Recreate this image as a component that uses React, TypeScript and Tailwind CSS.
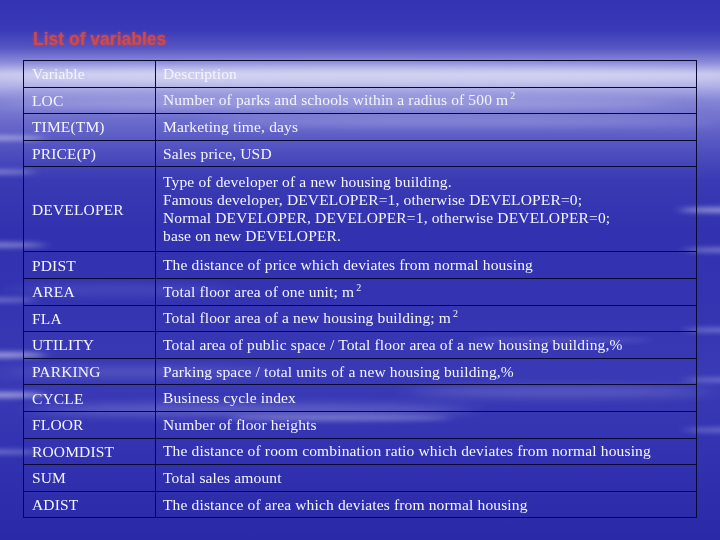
import React from 'react';

type Row = { name: string; desc: React.ReactNode; tall?: boolean };

const sup2 = <sup className="text-[10px] -top-[6px] leading-none ml-[2px]">2</sup>;

const rows: Row[] = [
  { name: 'Variable', desc: 'Description' },
  { name: 'LOC', desc: <>Number of parks and schools within a radius of 500 m{sup2}</> },
  { name: 'TIME(TM)', desc: 'Marketing time, days' },
  { name: 'PRICE(P)', desc: 'Sales price, USD' },
  {
    name: 'DEVELOPER',
    tall: true,
    desc: (
      <>
        Type of developer of a new housing building.
        <br />
        Famous developer, DEVELOPER=1, otherwise DEVELOPER=0;
        <br />
        Normal DEVELOPER, DEVELOPER=1, otherwise DEVELOPER=0;
        <br />
        base on new DEVELOPER.
      </>
    ),
  },
  { name: 'PDIST', desc: 'The distance of price which deviates from normal housing' },
  { name: 'AREA', desc: <>Total floor area of one unit; m{sup2}</> },
  { name: 'FLA', desc: <>Total floor area of a new housing building; m{sup2}</> },
  { name: 'UTILITY', desc: 'Total area of public space / Total floor area of a new housing building,%' },
  { name: 'PARKING', desc: 'Parking space / total units of a new housing building,%' },
  { name: 'CYCLE', desc: 'Business cycle index' },
  { name: 'FLOOR', desc: 'Number of floor heights' },
  { name: 'ROOMDIST', desc: 'The distance of room combination ratio which deviates from normal housing' },
  { name: 'SUM', desc: 'Total sales amount' },
  { name: 'ADIST', desc: 'The distance of area which deviates from normal housing' },
];

// soft white streaks over the blue, like the slide template's water texture
const Streaks = () => (
  <svg className="absolute inset-0 w-full h-full" viewBox="0 0 720 540" preserveAspectRatio="none">
    <defs>
      <filter id="soft" x="-20%" y="-100%" width="140%" height="300%">
        <feGaussianBlur stdDeviation="6 2.5" />
      </filter>
      <filter id="wide" x="-20%" y="-100%" width="140%" height="300%">
        <feGaussianBlur stdDeviation="14 5" />
      </filter>
    </defs>
    <g filter="url(#wide)" fill="#e0e0f8">
      <ellipse cx="360" cy="76" rx="380" ry="9" opacity="0.55" />
      <ellipse cx="340" cy="104" rx="330" ry="5" opacity="0.35" />
      <ellipse cx="460" cy="122" rx="260" ry="4" opacity="0.3" />
      <ellipse cx="250" cy="410" rx="220" ry="6" opacity="0.25" />
      <ellipse cx="560" cy="392" rx="150" ry="5" opacity="0.22" />
      <ellipse cx="140" cy="372" rx="140" ry="4" opacity="0.2" />
      <ellipse cx="120" cy="290" rx="110" ry="4" opacity="0.15" />
    </g>
    <g filter="url(#soft)" fill="#ececfc">
      <ellipse cx="0" cy="138" rx="45" ry="2" opacity="0.6" />
      <ellipse cx="0" cy="172" rx="35" ry="2" opacity="0.45" />
      <ellipse cx="0" cy="245" rx="45" ry="2.5" opacity="0.45" />
      <ellipse cx="0" cy="300" rx="35" ry="2" opacity="0.4" />
      <ellipse cx="0" cy="355" rx="45" ry="3" opacity="0.55" />
      <ellipse cx="0" cy="395" rx="45" ry="3" opacity="0.55" />
      <ellipse cx="0" cy="452" rx="40" ry="2" opacity="0.4" />
      <ellipse cx="720" cy="210" rx="40" ry="2.5" opacity="0.55" />
      <ellipse cx="720" cy="250" rx="35" ry="2" opacity="0.45" />
      <ellipse cx="720" cy="330" rx="35" ry="2" opacity="0.4" />
      <ellipse cx="720" cy="380" rx="35" ry="2" opacity="0.35" />
      <ellipse cx="720" cy="430" rx="35" ry="2" opacity="0.35" />
      <ellipse cx="340" cy="418" rx="110" ry="3" opacity="0.3" />
      <ellipse cx="560" cy="340" rx="90" ry="2" opacity="0.2" />
    </g>
  </svg>
);

export default function App() {
  return (
    <div className="relative w-[720px] h-[540px] overflow-hidden bg-[linear-gradient(180deg,#3333b3_0px,#3a3ab8_30px,#5656c4_48px,#8a8ad8_62px,#c0c0ec_74px,#b0b0e6_86px,#8686d6_100px,#6a6acc_122px,#5050c0_150px,#3a3ab4_180px,#3232b0_230px,#3434b2_300px,#3a3ab6_380px,#3434b2_440px,#2e2eac_500px,#2a2aa8_540px)]">
      <Streaks />
      <div className="relative flex flex-col pt-[29px]">
        <h1
          className="ml-[33px] h-[31px] text-[17.5px] leading-[21px] font-bold text-[#cf4a4a] blur-[0.5px] [text-shadow:0_0_3px_rgba(210,70,70,0.9)]"
          style={{ fontFamily: '"Liberation Sans", Arial, sans-serif' }}
        >
          List of variables
        </h1>
        <table
          className="ml-[23px] w-[674px] border-collapse text-[15.5px] tracking-[0.15px] text-[#f4f4ff] table-fixed"
          style={{ fontFamily: '"Liberation Serif", "Times New Roman", serif' }}
        >
          <colgroup>
            <col className="w-[132px]" />
            <col />
          </colgroup>
          <tbody>
            {rows.map((r) => (
              <tr key={r.name} className={r.tall ? 'h-[85px]' : 'h-[26.6px]'}>
                <td className="border border-[#0a0a30] pl-[8px] py-0 align-middle whitespace-nowrap">{r.name}</td>
                <td className="border border-[#0a0a30] pl-[7px] py-0 align-middle leading-[18px] whitespace-nowrap">
                  {r.desc}
                </td>
              </tr>
            ))}
          </tbody>
        </table>
      </div>
    </div>
  );
}
